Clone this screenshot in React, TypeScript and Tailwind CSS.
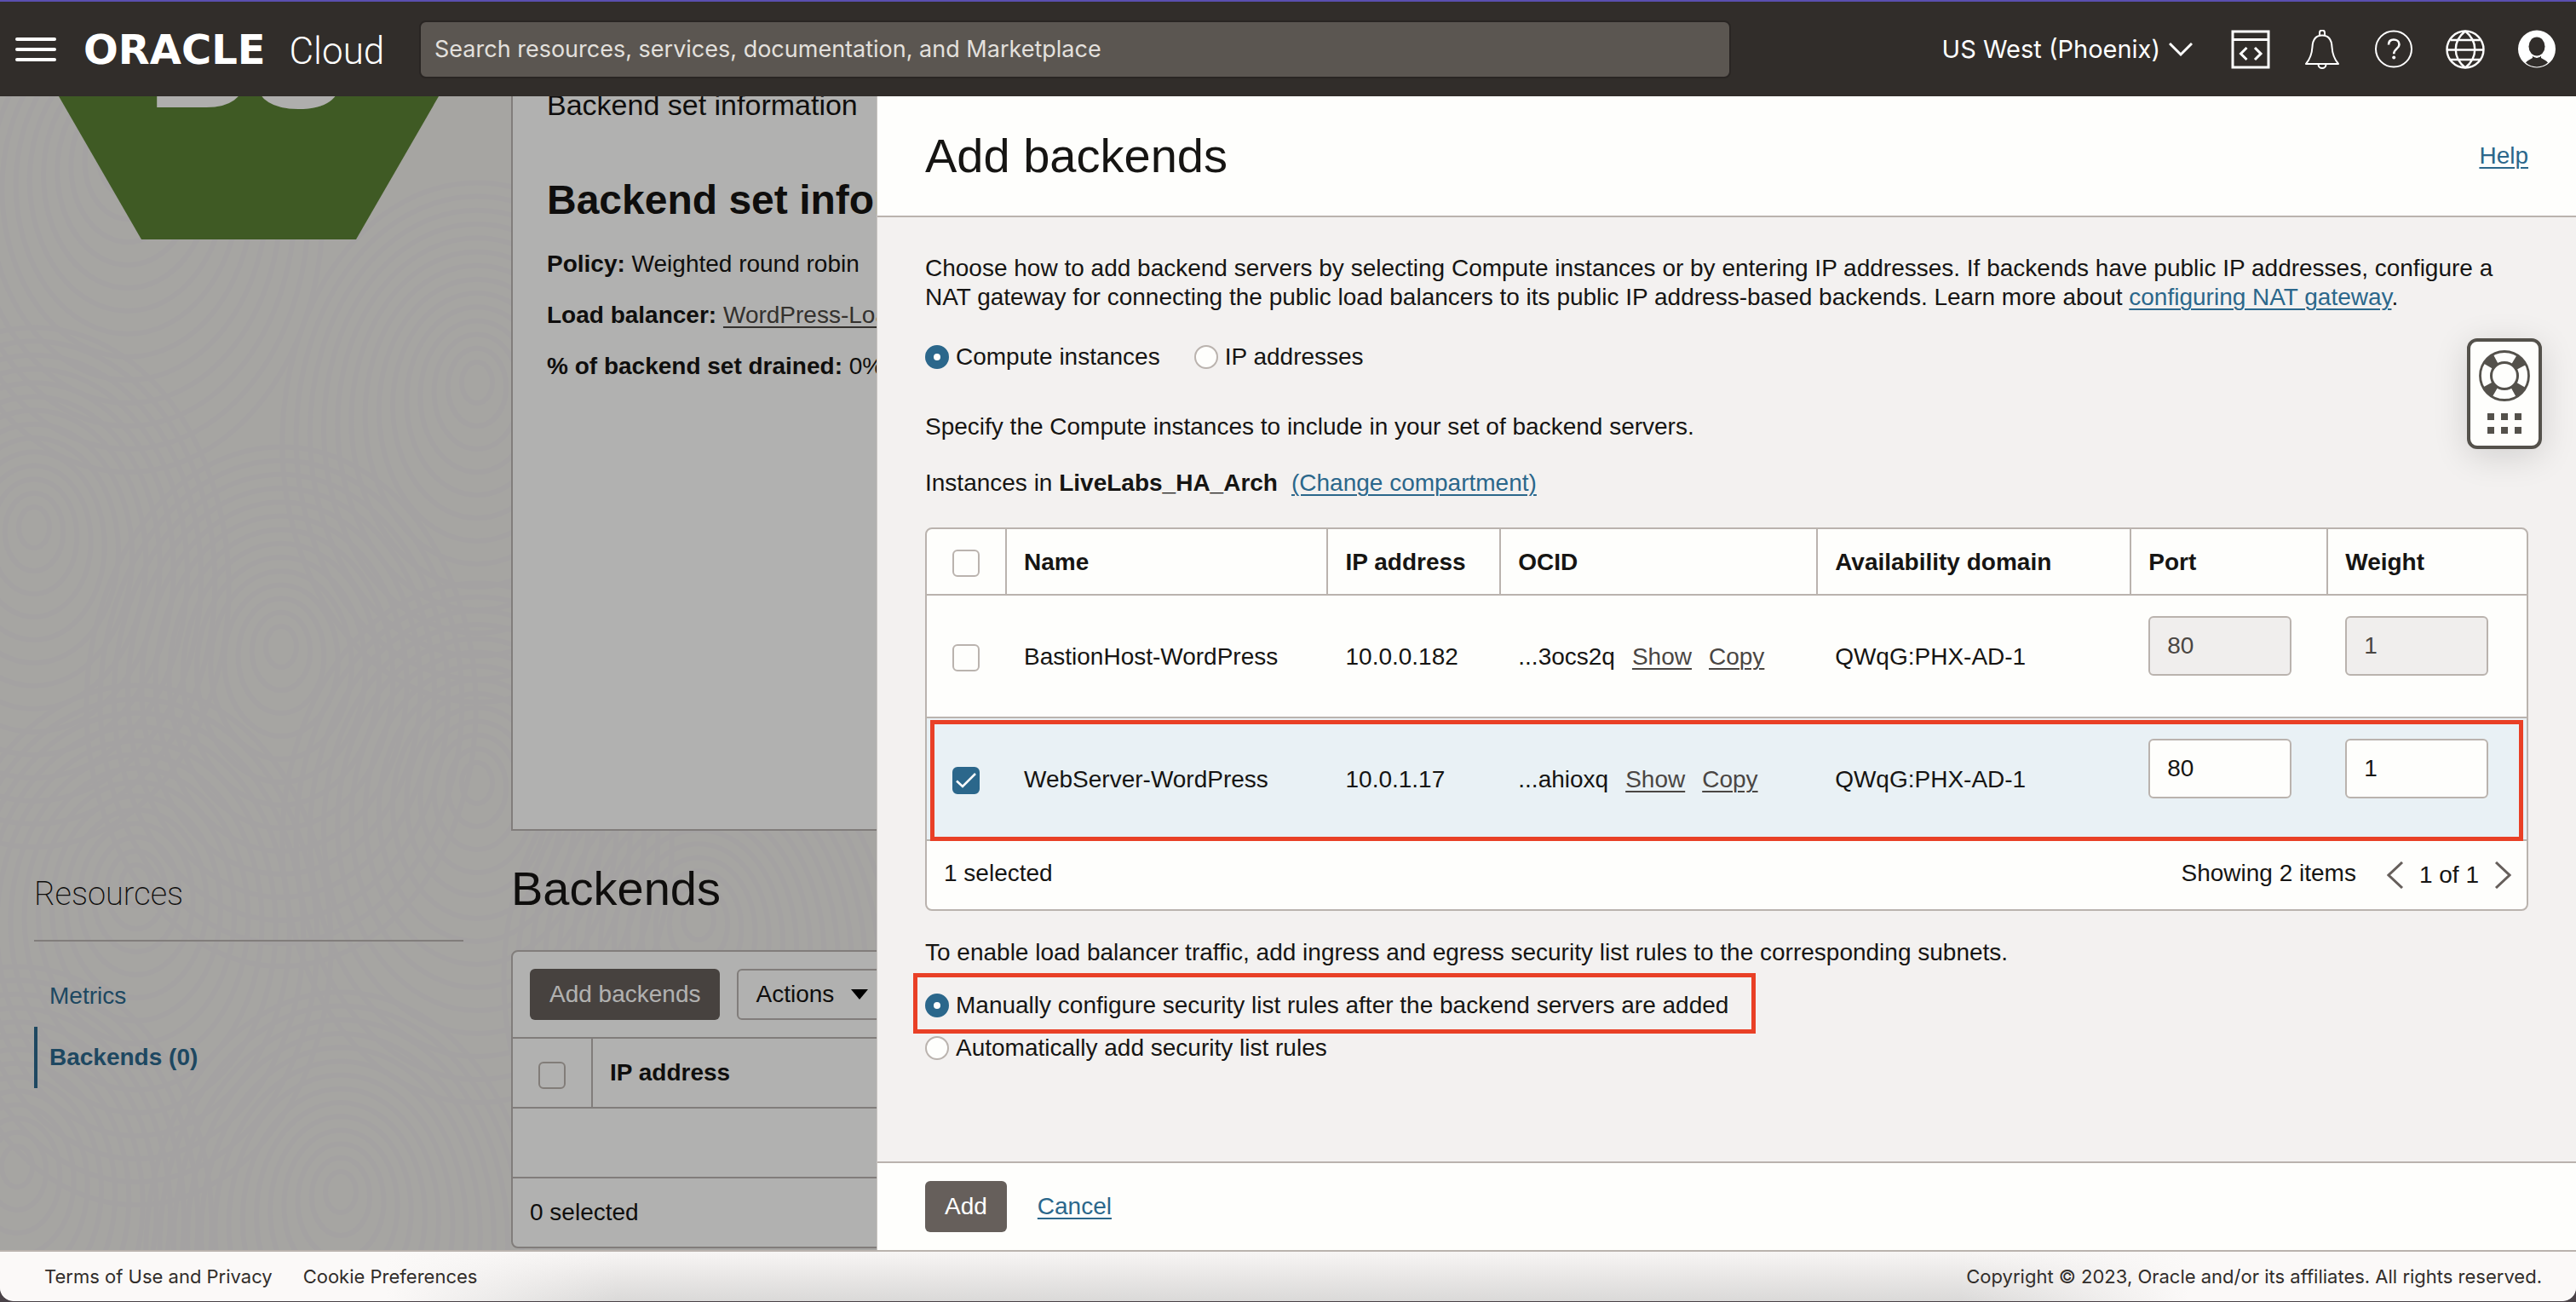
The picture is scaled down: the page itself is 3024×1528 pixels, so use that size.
import React from "react";

const ROWS = [
  { name: "BastionHost-WordPress", ip: "10.0.0.182", ocid: "...3ocs2q", domain: "QWqG:PHX-AD-1", port: "80", weight: "1", selected: false },
  { name: "WebServer-WordPress", ip: "10.0.1.17", ocid: "...ahioxq", domain: "QWqG:PHX-AD-1", port: "80", weight: "1", selected: true },
];

const iconButton = "flex h-12 w-12 items-center justify-center";
const link = "text-[#2b678b] underline decoration-2 underline-offset-4";

function DevToolsIcon() {
  return (
    <svg width="46" height="46" viewBox="0 0 46 46" fill="none" stroke="currentColor" strokeWidth="3" aria-hidden="true">
      <path d="M2 2h42v42H2zM2 11.500h42" />
      <path d="M18.500 21l-7 7 7 7M28 21l7 7-7 7" />
    </svg>
  );
}

function BellIcon() {
  return (
    <svg width="46" height="46" viewBox="0 0 46 46" fill="none" stroke="currentColor" strokeWidth="2" aria-hidden="true">
      <path d="M20 6.500V3.500a3 3 0 0 1 6 0v3" />
      <path d="M4 40c5-6 7-11 7.500-20C12 11 16 6.500 23 6.500S34 11 34.500 20C35 29 37 34 42 40z" strokeLinejoin="round" />
      <path d="M18.500 40.500a4.500 4.500 0 0 0 9 0" />
    </svg>
  );
}

function HelpIcon() {
  return (
    <svg width="46" height="46" viewBox="0 0 46 46" fill="none" stroke="currentColor" aria-hidden="true">
      <circle cx="23" cy="22.500" r="21" strokeWidth="2" />
      <path d="M17 17.500c0-4 2.500-6 6-6s6.500 2.200 6.500 5.700c0 5-6.300 5-6.300 11" strokeWidth="2.600" />
      <circle cx="23.200" cy="32.500" r="2" fill="currentColor" stroke="none" />
    </svg>
  );
}

function GlobeIcon() {
  return (
    <svg width="46" height="46" viewBox="0 0 46 46" fill="none" stroke="currentColor" strokeWidth="2.400" aria-hidden="true">
      <circle cx="23" cy="23" r="21.500" />
      <path d="M23 1.500c-15 12-15 31 0 43M23 1.500c15 12 15 31 0 43M1.500 23.500h43M5.500 12h35M5.500 35h35" />
    </svg>
  );
}

function ProfileIcon() {
  return (
    <svg width="46" height="46" viewBox="0 0 46 46" aria-hidden="true">
      <circle cx="23" cy="22.500" r="22" fill="#fff" />
      <ellipse cx="23" cy="19.500" rx="9.500" ry="11" fill="#312d2a" />
      <path d="M10 38.500c2-2.500 5-4 8-5.500v-2.500c3 2.200 7 2.200 10 0V33c3 1.500 6 3 8 5.500-7.500 6.500-18.500 6.500-26 0z" fill="#312d2a" />
      <path d="M17.500 29.500c3.500 3.400 7.500 3.400 11 0" stroke="#fff" strokeWidth="1.500" fill="none" />
    </svg>
  );
}

function Header() {
  return (
    <header className="flex h-[113px] items-center border-t-2 border-[#5a4fb0] bg-[#312d2a] pr-[22px] pl-4.5 font-[Inter,sans-serif] text-white">
      <button type="button" aria-label="Open navigation menu" className="flex w-12 flex-col gap-2">
        <span className="h-1 rounded-full bg-white" />
        <span className="h-1 rounded-full bg-white" />
        <span className="h-1 rounded-full bg-white" />
      </button>
      <a href="#home" className="ml-8 flex w-[394px] items-baseline gap-7 whitespace-nowrap">
        <span className="font-['DejaVu_Sans',sans-serif] text-[48px] leading-none font-bold">ORACLE</span>
        <span className="font-[Roboto,sans-serif] text-[44px] leading-none font-light">Cloud</span>
      </a>
      <input
        type="text"
        aria-label="Search"
        placeholder="Search resources, services, documentation, and Marketplace"
        className="h-[68px] w-[1540px] rounded-lg border-2 border-[#292523] bg-[#5b5651] px-4 text-[27px] text-white placeholder:text-[#e3e0dd]"
      />
      <div className="ml-auto flex items-center gap-9">
        <button type="button" className="mr-2 flex items-center gap-2.5 text-[29px] whitespace-nowrap">
          US West (Phoenix)
          <svg width="28" height="18" viewBox="0 0 28 18" fill="none" stroke="currentColor" strokeWidth="3" aria-hidden="true">
            <path d="M1 2l13 13L27 2" />
          </svg>
        </button>
        <button type="button" aria-label="Developer tools" className={iconButton}><DevToolsIcon /></button>
        <button type="button" aria-label="Announcements" className={iconButton}><BellIcon /></button>
        <button type="button" aria-label="Help" className={iconButton}><HelpIcon /></button>
        <button type="button" aria-label="Language" className={iconButton}><GlobeIcon /></button>
        <button type="button" aria-label="Profile" className={iconButton}><ProfileIcon /></button>
      </div>
    </header>
  );
}

const RING_CENTERS = [
  [150, 60], [560, 330], [40, 500], [330, 640], [160, 920], [400, 1280], [820, 960], [560, 800], [20, 1250],
];
const RING_RADII = [20, 38, 56, 74, 92, 110, 128, 146, 164, 182, 200, 218, 236, 254];

function Texture() {
  return (
    <svg className="absolute inset-0 h-full w-full" aria-hidden="true" fill="none" stroke="#ebe9e8" strokeWidth="6">
      {RING_CENTERS.map(([x, y], i) => (
        <g key={i}>
          {RING_RADII.map((r) => (
            <ellipse key={r} cx={x} cy={y + r * 0.3} rx={r * 0.9} ry={r * 1.2} />
          ))}
        </g>
      ))}
    </svg>
  );
}

function Checkbox({ label, checked }: { label: string; checked?: boolean }) {
  return (
    <span className="relative inline-flex h-8 w-8 align-middle">
      <input
        type="checkbox"
        aria-label={label}
        defaultChecked={checked}
        className="peer h-8 w-8 appearance-none rounded-md border-2 border-[#bab3ae] bg-[#fefefc] checked:border-[#2b678b] checked:bg-[#2b678b]"
      />
      <svg className="pointer-events-none absolute inset-0 hidden peer-checked:block" width="32" height="32" viewBox="0 0 32 32" fill="none" stroke="#fff" strokeWidth="2.500" aria-hidden="true">
        <path d="M5 16.500l7 6.500L27 8" />
      </svg>
    </span>
  );
}

function BackgroundPage() {
  return (
    <div className="relative flex w-[1029px] shrink-0 overflow-hidden bg-[#eeece9] whitespace-nowrap">
      <Texture />
      <aside className="relative w-[600px] shrink-0 px-10">
        <svg className="ml-7 block" width="450" height="168" viewBox="68 113 450 168" role="img" aria-label="BS">
          <path d="M69 113h446l-97 168H166z" fill="#5b8234" />
          <text x="173" y="126" fontFamily="Liberation Sans, sans-serif" fontWeight="700" fontSize="168" fill="#fbfaf8">BS</text>
        </svg>
        <div className="mr-4 mt-[744px] border-b-2 border-[#b9b4b0] pb-7.5">
          <h2 className="font-[Roboto,sans-serif] text-[38px] leading-12 font-extralight text-[#161513]">Resources</h2>
        </div>
        <nav className="mt-7 flex flex-col text-[28px] text-[#2b678b]">
          <a href="#metrics" className="flex h-18 items-center border-l-4 border-transparent pl-3.5">Metrics</a>
          <a href="#backends" className="flex h-18 items-center border-l-4 border-[#2b678b] pl-3.5 font-bold">Backends (0)</a>
        </nav>
      </aside>
      <main className="relative w-[1600px] shrink-0">
        <section className="-mt-2.5 h-[872px] border-b-2 border-l-2 border-[#b9b4b0] bg-[#fefefc] pl-10 text-[28px] leading-[34px]">
          <p className="text-[34px] leading-10">Backend set information</p>
          <h2 className="mt-16 text-[48px] leading-[56px] font-bold">Backend set information</h2>
          <p className="mt-[30px]"><b>Policy:</b> Weighted round robin</p>
          <p className="mt-[26px]"><b>Load balancer:</b> <a href="#lb" className="text-[#4b4743] underline decoration-2 underline-offset-4">WordPress-Load-Balancer</a></p>
          <p className="mt-[26px]"><b>% of backend set drained:</b> 0%</p>
        </section>
        <h1 className="mt-10 text-[56px] leading-[56px]">Backends</h1>
        <section className="mt-[44px] rounded-lg border-2 border-[#b9b4b0] bg-[#fefefc] text-[28px]">
          <div className="flex gap-5 px-5 py-5">
            <button type="button" className="h-[60px] rounded-md bg-[#665f5b] px-[23px] text-[#fefefc]">Add backends</button>
            <button type="button" className="flex h-[60px] items-center gap-5 rounded-md border-2 border-[#b9b4b0] px-5">
              Actions
              <svg width="20" height="12" viewBox="0 0 20 12" aria-hidden="true"><path d="M0 0h20L10 12z" /></svg>
            </button>
          </div>
          <table className="w-full table-fixed border-separate border-spacing-0 text-left">
            <colgroup>
              <col className="w-[94px]" />
              <col />
            </colgroup>
            <thead>
              <tr className="h-[84px]">
                <th className="border-y-2 border-r-2 border-[#b9b4b0] pt-1 text-center"><Checkbox label="Select all backends" /></th>
                <th className="border-y-2 border-[#b9b4b0] pl-5">IP address</th>
              </tr>
            </thead>
            <tbody>
              <tr className="h-[82px]"><td colSpan={2} className="border-b-2 border-[#b9b4b0]" /></tr>
            </tbody>
          </table>
          <p className="flex h-20 items-center px-5">0 selected</p>
        </section>
      </main>
      <div className="absolute inset-0 bg-black/30" />
    </div>
  );
}

function Radio({ name, label, checked }: { name: string; label: string; checked?: boolean }) {
  return (
    <label className="flex items-center gap-2">
      <input
        type="radio"
        name={name}
        defaultChecked={checked}
        className="h-7 w-7 appearance-none rounded-full border-2 border-[#bab3ae] bg-[#fefefc] checked:border-10 checked:border-[#2b678b]"
      />
      {label}
    </label>
  );
}

function InstancesTable() {
  const th = "border-b-2 border-l-2 border-[#bab3ae] pt-0.5 pl-5 font-bold";
  const td = "border-b-2 border-[#bab3ae] pt-0.5 pl-[22px]";
  const fieldCell = "border-b-2 border-[#bab3ae] pt-6 pl-[22px] align-top";
  const field = "h-[70px] w-42 rounded-md border-2 border-[#bab3ae] bg-[#fefefc] px-5 disabled:bg-[#f0eeed] disabled:text-[#4a4643]";
  const action = "ml-5 text-[#4a4643] underline decoration-2 underline-offset-4";
  return (
    <div className="relative mt-[35px] overflow-hidden rounded-lg border-2 border-[#bab3ae] bg-[#fefefc]">
      <table className="w-full table-fixed border-separate border-spacing-0 text-left">
        <colgroup>
          <col className="w-[4.900%]" />
          <col className="w-[20.1%]" />
          <col className="w-[10.8%]" />
          <col className="w-[19.800%]" />
          <col className="w-[19.600%]" />
          <col className="w-[12.300%]" />
          <col />
        </colgroup>
        <thead>
          <tr className="h-[78px]">
            <th className="border-b-2 border-[#bab3ae] pt-0.5 text-center"><Checkbox label="Select all instances" /></th>
            <th className={th}>Name</th>
            <th className={th}>IP address</th>
            <th className={th}>OCID</th>
            <th className={th}>Availability domain</th>
            <th className={th}>Port</th>
            <th className={th}>Weight</th>
          </tr>
        </thead>
        <tbody>
          {ROWS.map((row) => (
            <tr key={row.name} className={row.selected ? "h-36 bg-[#e9f1f5]" : "h-36"}>
              <td className="border-b-2 border-[#bab3ae] pt-0.5 text-center"><Checkbox label={"Select " + row.name} checked={row.selected} /></td>
              <td className={td}>{row.name}</td>
              <td className={td}>{row.ip}</td>
              <td className={td}>
                {row.ocid}
                <button type="button" className={action}>Show</button>
                <button type="button" className={action}>Copy</button>
              </td>
              <td className={td}>{row.domain}</td>
              <td className={fieldCell}>
                <input type="text" aria-label={"Port for " + row.name} defaultValue={row.port} disabled={!row.selected} className={field} />
              </td>
              <td className={fieldCell}>
                <input type="text" aria-label={"Weight for " + row.name} defaultValue={row.weight} disabled={!row.selected} className={field} />
              </td>
            </tr>
          ))}
        </tbody>
      </table>
      <div className="flex h-20 items-center pr-[18px] pl-5">
        <span className="pb-1">1 selected</span>
        <span className="ml-auto pb-1">Showing 2 items</span>
        <button type="button" aria-label="Previous page" className="ml-9 text-[#665f5b]">
          <svg width="20" height="32" viewBox="0 0 20 32" fill="none" stroke="currentColor" strokeWidth="3" aria-hidden="true"><path d="M18 1L2 16l16 15" /></svg>
        </button>
        <span className="mx-[18px]">1 of 1</span>
        <button type="button" aria-label="Next page" className="text-[#665f5b]">
          <svg width="20" height="32" viewBox="0 0 20 32" fill="none" stroke="currentColor" strokeWidth="3" aria-hidden="true"><path d="M2 1l16 15L2 31" /></svg>
        </button>
      </div>
      <div className="pointer-events-none absolute inset-x-1 top-56 h-[142px] border-5 border-[#e94026]" />
    </div>
  );
}

function SupportWidget() {
  return (
    <button type="button" aria-label="Support options" className="absolute top-[284px] right-10 flex h-[130px] w-22 flex-col items-center gap-3.5 rounded-xl border-4 border-[#54514b] bg-[#fefefc] pt-2.5 text-[#54514b] shadow-[0_8px_40px_rgba(0,0,0,0.14)]">
      <svg width="60" height="60" viewBox="0 0 60 60" fill="none" stroke="currentColor" aria-hidden="true">
        <circle cx="30" cy="30" r="22" strokeWidth="13" strokeDasharray="12 22.560" strokeDashoffset="-11.280" />
        <circle cx="30" cy="30" r="28.500" strokeWidth="2.800" />
        <circle cx="30" cy="30" r="15.500" strokeWidth="3" />
      </svg>
      <span className="grid grid-cols-3 gap-2">
        {[0, 1, 2, 3, 4, 5].map((i) => <span key={i} className="h-2 w-2 bg-[#54514b]" />)}
      </span>
    </button>
  );
}

function Drawer() {
  return (
    <section className="relative flex min-w-0 flex-1 flex-col border-l border-[#c9c5c2] bg-[#f3f1f0]">
      <div className="flex h-[142px] items-center justify-between border-b-2 border-[#bab3ae] bg-[#fefefc] px-14">
        <h1 className="text-[56px] leading-16">Add backends</h1>
        <a href="#help" className={link}>Help</a>
      </div>
      <div className="flex-1 px-14 pt-[43px]">
        <p className="max-w-[1872px]">
          Choose how to add backend servers by selecting Compute instances or by entering IP addresses. If backends have public IP addresses, configure a NAT gateway for connecting the public load balancers to its public IP address-based backends. Learn more about <a href="#nat" className={link}>configuring NAT gateway</a>.
        </p>
        <div className="mt-9 flex gap-10">
          <Radio name="source" label="Compute instances" checked />
          <Radio name="source" label="IP addresses" />
        </div>
        <p className="mt-12">Specify the Compute instances to include in your set of backend servers.</p>
        <p className="mt-8">
          Instances in <b>LiveLabs_HA_Arch</b>
          <a href="#compartment" className={link + " ml-4"}>(Change compartment)</a>
        </p>
        <InstancesTable />
        <p className="mt-8">To enable load balancer traffic, add ingress and egress security list rules to the corresponding subnets.</p>
        <div className="mt-7 flex flex-col items-start gap-4">
          <div className="relative">
            <Radio name="rules" label="Manually configure security list rules after the backend servers are added" checked />
            <div className="pointer-events-none absolute -top-[21px] -right-8 -bottom-4 -left-3.5 border-5 border-[#e94026]" />
          </div>
          <Radio name="rules" label="Automatically add security list rules" />
        </div>
      </div>
      <div className="flex h-[104px] items-center gap-9 border-t-2 border-[#bab3ae] bg-[#fefefc] px-14">
        <button type="button" className="h-15 rounded-md bg-[#665f5b] px-[23px] text-white">Add</button>
        <button type="button" className={link}>Cancel</button>
      </div>
      <SupportWidget />
    </section>
  );
}

function Footer() {
  return (
    <footer className="bg-[#4a4348]">
      <div className="overflow-hidden rounded-b-2xl bg-[#fbf9f8]">
        <div className="flex h-[60px] items-center gap-9 border-t-2 border-[#bab3ae] bg-[linear-gradient(to_right,#fbf9f8_15%,rgba(251,249,248,0)_24%,rgba(251,249,248,0)_76%,#fbf9f8_85%),linear-gradient(to_bottom,#f7f5f4,#dad9d8)] px-[52px] pr-10 font-[Inter,sans-serif] text-[22px] text-[#312d2a]">
          <a href="#terms">Terms of Use and Privacy</a>
          <a href="#cookies">Cookie Preferences</a>
          <span className="ml-auto">Copyright © 2023, Oracle and/or its affiliates. All rights reserved.</span>
        </div>
      </div>
      <div className="h-px" />
    </footer>
  );
}

export default function App() {
  return (
    <div className="flex min-h-screen flex-col font-['Liberation_Sans',Arial,sans-serif] text-[28px] leading-[34px] text-[#161513]">
      <Header />
      <div className="flex flex-1">
        <BackgroundPage />
        <Drawer />
      </div>
      <Footer />
    </div>
  );
}
